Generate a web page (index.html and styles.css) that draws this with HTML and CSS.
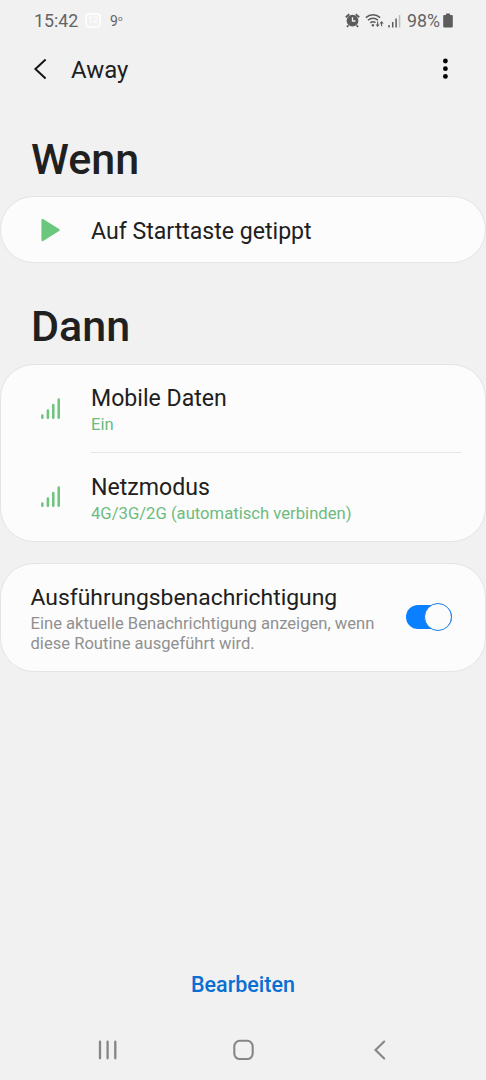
FILE: index.html
```html
<!DOCTYPE html>
<html lang="de">
<head>
  <meta charset="UTF-8">
  <meta name="viewport" content="width=device-width, initial-scale=1">
  <title>Away</title>
  <link rel="stylesheet" href="styles.css">
</head>
<body>
  <div class="statusbar">
    <span class="time">15:42</span>
    <span class="calendar">12</span>
    <span class="temp">9<span class="degree">o</span></span>
    <svg class="alarm" width="15" height="15" viewBox="0 0 15 15">
      <circle cx="7.500" cy="7.700" r="5.900" fill="#5c5c5c"/>
      <path d="M.8 4.200L4.300 1.200M14.200 4.200L10.700 1.200M3.400 12.200L2 14M11.600 12.200l1.400 1.800" stroke="#5c5c5c" stroke-width="1.800" fill="none"/>
      <path d="M7.500 4.200V8h3" stroke="#f1f1f1" stroke-width="1.300" fill="none"/>
    </svg>
    <svg class="wifi" width="19" height="15" viewBox="0 0 19 15">
      <path d="M.9 4.600a10.400 10.400 0 0 1 14.200 0M3 7.300a7.300 7.300 0 0 1 10 0M5.300 9.900a4 4 0 0 1 5.200-.2" stroke="#5c5c5c" stroke-width="1.500" fill="none"/>
      <circle cx="7.900" cy="12.300" r="1.200" fill="#5c5c5c"/>
      <path d="M12.600 8.500v4M16.600 13.300v-4" stroke="#5c5c5c" stroke-width="1.100"/>
      <path d="M10.500 11.500h4.200L12.600 14zM14.500 10.500h4.200L16.600 8z" fill="#5c5c5c"/>
    </svg>
    <svg class="signal" width="13" height="14" viewBox="0 0 13 14">
      <path d="M1 13.500V11M4.700 13.500V8M8.100 13.500V4.500" stroke="#5c5c5c" stroke-width="1.500"/>
      <path d="M11.600 13.500V1" stroke="#bdbdbd" stroke-width="1.500"/>
    </svg>
    <span class="percent">98%</span>
    <svg class="battery" width="10" height="15" viewBox="0 0 10 15">
      <path d="M3 .5h4V2h1.800q1 0 1 1v10.500q0 1-1 1H1.200q-1 0-1-1V3q0-1 1-1H3z" fill="#5c5c5c"/>
    </svg>
  </div>

  <header class="appbar">
    <svg class="back" width="14" height="22" viewBox="0 0 14 22">
      <path d="M12.600 1.500L2.400 11l10.200 9.500" fill="none" stroke="#161616" stroke-width="2"/>
    </svg>
    <h1>Away</h1>
    <svg class="more" width="6" height="22" viewBox="0 0 6 22">
      <circle cx="3.400" cy="3" r="2.400"/>
      <circle cx="3.400" cy="10.700" r="2.400"/>
      <circle cx="3.400" cy="18.400" r="2.400"/>
    </svg>
  </header>

  <main>
    <h2 class="wenn">Wenn</h2>
    <section class="card trigger">
      <svg class="icon" width="20" height="24" viewBox="0 0 20 24">
        <path d="M2.500 2l16 10-16 10z" fill="#6ac77c" stroke="#6ac77c" stroke-width="2.200" stroke-linejoin="round"/>
      </svg>
      <p class="title">Auf Starttaste getippt</p>
    </section>

    <h2 class="dann">Dann</h2>
    <section class="card">
      <div class="row">
        <svg class="icon" width="20" height="22" viewBox="0 0 20 22">
          <path d="M2.300 19.800v-2.300M7.900 19.800v-7.200M13.300 19.800V7M18.700 19.800V1.500" stroke="#6cc47d" stroke-width="2.500" stroke-linecap="round"/>
        </svg>
        <div class="text">
          <p class="title">Mobile Daten</p>
          <p class="value">Ein</p>
        </div>
      </div>
      <div class="row">
        <svg class="icon" width="20" height="22" viewBox="0 0 20 22">
          <path d="M2.300 19.800v-2.300M7.900 19.800v-7.200M13.300 19.800V7M18.700 19.800V1.500" stroke="#6cc47d" stroke-width="2.500" stroke-linecap="round"/>
        </svg>
        <div class="text">
          <p class="title">Netzmodus</p>
          <p class="value">4G/3G/2G (automatisch verbinden)</p>
        </div>
      </div>
    </section>

    <section class="card notify">
      <div class="notify-text">
        <p class="title">Ausführungsbenachrichtigung</p>
        <p class="desc">Eine aktuelle Benachrichtigung anzeigen, wenn diese Routine ausgeführt wird.</p>
      </div>
      <div class="switch"><div class="knob"></div></div>
    </section>
  </main>

  <button class="edit" type="button">Bearbeiten</button>

  <nav class="navbar">
    <svg width="20" height="20" viewBox="0 0 20 20">
      <path d="M2 1.700v16.600M9.600 1.700v16.600M17.300 1.700v16.600" stroke="#868686" stroke-width="2.300" stroke-linecap="round"/>
    </svg>
    <svg width="22" height="22" viewBox="0 0 22 22">
      <rect x="1.300" y="1.800" width="18.400" height="18.200" rx="5.500" fill="none" stroke="#868686" stroke-width="2.100"/>
    </svg>
    <svg width="20" height="20" viewBox="0 0 20 20">
      <path d="M14.200 1.600L5.500 10l8.700 8.400" fill="none" stroke="#868686" stroke-width="2.100" stroke-linecap="round"/>
    </svg>
  </nav>
</body>
</html>
```
FILE: styles.css
```css
* {
  box-sizing: border-box;
}
body {
  margin: 0;
  height: 1080px;
  display: flex;
  flex-direction: column;
  background: #f1f1f1;
  color: #202020;
  font-family: Roboto, sans-serif;
  overflow: hidden;
}
h1, h2, p {
  margin: 0;
}
svg {
  display: block;
  flex-shrink: 0;
}
.statusbar {
  height: 41px;
  padding: 0 33px 0 34px;
  display: flex;
  align-items: center;
  color: #646464;
  font-size: 17.8px;
}
.time {
  width: 51px;
}
.calendar {
  width: 16px;
  height: 15px;
  border: 2px solid #fcfcfc;
  border-radius: 4px;
  color: #fcfcfc;
  font-size: 9px;
  font-weight: bold;
  line-height: 11px;
  text-align: center;
}
.temp {
  margin-left: 9px;
  font-size: 14px;
}
.degree {
  font-size: 8px;
  vertical-align: 5px;
}
.alarm {
  margin-left: auto;
}
.wifi {
  margin-left: 5px;
}
.signal {
  margin-left: 4px;
}
.percent {
  margin-left: 6px;
}
.battery {
  margin-left: 3px;
}
.appbar {
  height: 57px;
  padding: 0 38px 0 33px;
  display: flex;
  align-items: center;
}
.appbar h1 {
  margin-left: 24px;
  padding-top: 1px;
  font-size: 23.9px;
  font-weight: 400;
  line-height: 28px;
}
.back {
  margin-bottom: 2px;
}
.more {
  margin-left: auto;
  margin-bottom: 2px;
}
h2 {
  padding-left: 31px;
  font-size: 43px;
  font-weight: 500;
  line-height: 74px;
}
.wenn {
  margin-top: 24px;
}
.dann {
  margin-top: 26px;
  padding-bottom: 1px;
}
.card {
  background: #fcfcfc;
  border: 1px solid #e4e4e4;
  border-radius: 34px;
}
.trigger {
  height: 67px;
  padding-left: 39px;
  display: flex;
  align-items: center;
}
.trigger .title {
  margin-left: 31px;
  padding-top: 3px;
}
.title {
  font-size: 23.1px;
  line-height: 31px;
}
.value {
  color: #6dbb7e;
  font-size: 16.65px;
  line-height: 22px;
}
.row {
  height: 88px;
  padding: 0 24px 0 39px;
  display: flex;
  align-items: center;
  gap: 31px;
}
.text {
  flex: 1;
  height: 100%;
  padding-top: 18px;
}
.row:first-child .text {
  border-bottom: 1px solid #e6e6e6;
}
.row:last-child .text {
  padding-top: 19px;
}
.notify {
  height: 109px;
  margin-top: 21px;
  padding: 18px 33px 0 29.5px;
  display: flex;
  justify-content: space-between;
}
.notify .title {
  font-size: 22.9px;
}
.desc {
  width: 350px;
  padding-top: 1px;
  color: #909090;
  font-size: 16.6px;
  line-height: 19.5px;
}
.switch {
  width: 46px;
  height: 24px;
  margin-top: 23px;
  border-radius: 12px;
  background: #0a7fff;
  display: flex;
  justify-content: flex-end;
  align-items: center;
}
.knob {
  width: 28px;
  height: 28px;
  flex-shrink: 0;
  border: 1.5px solid #1c7be0;
  border-radius: 50%;
  background: #fcfcfc;
}
.edit {
  margin-top: auto;
  padding: 0;
  border: 0;
  background: none;
  color: #0a6fd2;
  font: 500 21.5px/40px Roboto, sans-serif;
}
.navbar {
  height: 60px;
  margin-top: 15px;
  padding: 0 96px 0 98px;
  display: flex;
  justify-content: space-between;
  align-items: center;
}
```
